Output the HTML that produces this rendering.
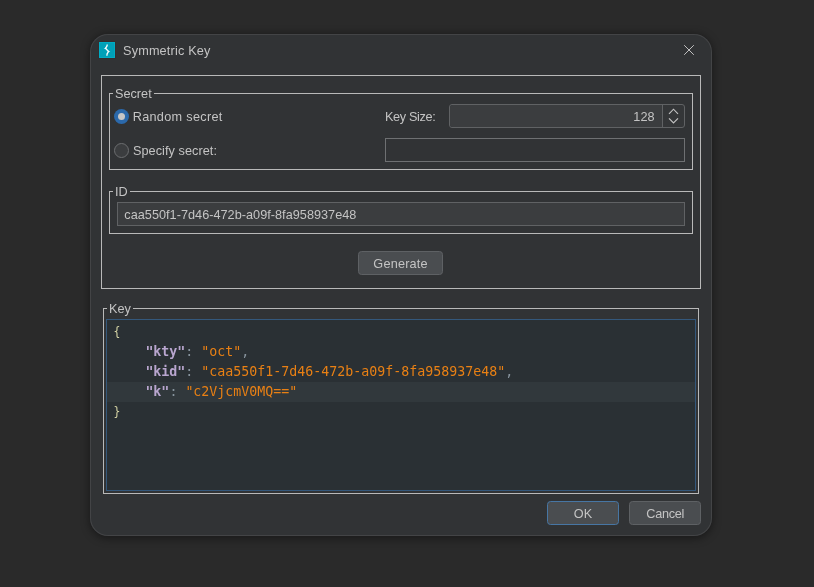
<!DOCTYPE html>
<html lang="en">
<head>
<meta charset="utf-8">
<title>Symmetric Key</title>
<style>
  html, body { margin: 0; padding: 0; }
  body {
    width: 814px; height: 587px; overflow: hidden; position: relative;
    background: #2a2a2a;
    font-family: "Liberation Sans", "DejaVu Sans", sans-serif;
    font-size: 12.7px; color: #c4c4c4;
  }
  #layer { position: absolute; left: 0; top: 0; width: 814px; height: 587px; will-change: transform; }
  .abs { position: absolute; box-sizing: border-box; }
  #dialog {
    left: 90px; top: 34px; width: 622px; height: 502px;
    background: #313335; border-radius: 18px;
    box-shadow: 0 0 0 1px rgba(96,96,98,0.4) inset, 0 1.5px 10px 0 rgba(0,0,0,0.46);
  }
  #icon { left: 99px; top: 42px; width: 16px; height: 16px; background: #00a0b8; box-shadow: inset 0 0 0 1px rgba(0,190,215,0.4), 0 0 0 0.5px rgba(60,34,34,0.45); }
  #title { left: 123px; top: 43px; letter-spacing: 0.17px; height: 16px; line-height: 16px; white-space: nowrap; }
  #close { left: 681px; top: 42px; width: 16px; height: 16px; }
  .line { background: #c9c9c9; }
  .lbl { white-space: nowrap; height: 16px; line-height: 16px; }
  .grp-title { background: #313335; padding: 0 2px; }
  .field { border: 1px solid #606264; background: #3b3d3f; }
  .btn {
    border: 1px solid #5e6164; background: #4a4d50; border-radius: 3.5px;
    text-align: center; line-height: 24px; height: 24px; white-space: nowrap;
  }
  .radio { width: 15px; height: 15px; border-radius: 50%; }
  #editor { left: 106px; top: 319px; width: 590px; height: 172px; background: #2a3034; border: 1px solid #34587c; }
  #curline { left: 107px; top: 382px; width: 588px; height: 20px; background: #31383c; }
  .code {
    font-family: "DejaVu Sans Mono", "Liberation Mono", monospace; font-size: 13.29px;
    white-space: pre; height: 20px; line-height: 20px; left: 113.4px; color: #87939d;
  }
  .k { color: #b9a6cf; font-weight: bold; }
  .s { color: #e98014; }
  .q { color: #a6a6a6; }
  .b { color: #d6d5a6; font-size: 11.4px; position: relative; top: 0px; }
</style>
</head>
<body>
<div id="layer">
<div id="dialog" class="abs"></div>

<!-- title bar -->
<div id="icon" class="abs">
  <svg width="16" height="16" viewBox="0 0 16 16"><path d="M8.2 2.5 L8.05 3.9 L6.5 6.3 L9.5 9.5 L8.1 11.9 L7.9 13.7" stroke="#f4fcfd" stroke-width="1.35" fill="none" stroke-linejoin="round"/><path d="M4.7 6.5 L6.9 5.5 L7.3 7.1 Z M11.3 9.3 L9.1 8.7 L8.7 10.4 Z" fill="#f4fcfd"/></svg>
</div>
<div id="title" class="abs">Symmetric Key</div>
<svg id="close" class="abs" viewBox="0 0 16 16"><path d="M3.2 3.2 L12.8 12.8 M12.8 3.2 L3.2 12.8" stroke="#c8c8c8" stroke-width="0.95" fill="none"/></svg>

<!-- outer panel border (101,75)-(700,288) -->
<div class="abs" style="left:101px;top:75px;width:600px;height:214px;border:1px solid #b9b9b9;"></div>

<!-- Secret group (109,93)-(692,169) -->
<div class="abs" style="left:109px;top:93px;width:584px;height:77px;border:1px solid #b9b9b9;"></div>
<div class="abs lbl grp-title" style="left:113px;top:86px;">Secret</div>

<div class="abs radio" style="left:114px;top:109px;background:#2b69ab;"></div>
<div class="abs" style="left:118px;top:113px;width:7px;height:7px;border-radius:50%;background:#c6c6c6;"></div>
<div class="abs lbl" style="left:132.7px;top:109px;letter-spacing:0.3px;">Random secret</div>

<div class="abs radio" style="left:114px;top:143px;background:#3b3d3f;border:1px solid #6c6e70;"></div>
<div class="abs lbl" style="left:133px;top:143px;letter-spacing:0.05px;">Specify secret:</div>

<div class="abs lbl" style="left:385px;top:109px;letter-spacing:-0.35px;">Key Size:</div>
<!-- spinner (449,104)-(685,128) -->
<div class="abs field" style="left:449px;top:104px;width:236px;height:24px;border-radius:3px;background:#343638;"></div>
<div class="abs" style="left:450px;top:105px;width:212px;height:22px;background:#3b3d3f;border-radius:3px 0 0 3px;"></div>
<div class="abs" style="left:662px;top:105px;width:1px;height:22px;background:#606264;"></div>
<div class="abs lbl" style="left:600px;top:109px;width:54.5px;text-align:right;">128</div>
<svg class="abs" style="left:664px;top:105px;width:20px;height:22px;" viewBox="0 0 20 22"><path d="M5 8.8 L9.5 4.2 L14 8.8 M5 13.4 L9.5 18 L14 13.4" stroke="#c2c2c2" stroke-width="1.15" fill="none"/></svg>

<!-- secret text field (385,138)-(685,162) -->
<div class="abs" style="left:385px;top:138px;width:300px;height:24px;border:1px solid #6e7072;background:#313335;"></div>

<!-- ID group (109,191)-(692,233) -->
<div class="abs" style="left:109px;top:191px;width:584px;height:43px;border:1px solid #b9b9b9;"></div>
<div class="abs lbl grp-title" style="left:113px;top:184px;">ID</div>
<div class="abs field" style="left:117px;top:202px;width:568px;height:24px;"></div>
<div class="abs lbl" style="left:124.3px;top:207px;letter-spacing:0.02px;">caa550f1-7d46-472b-a09f-8fa958937e48</div>

<!-- Generate -->
<div class="abs btn" style="left:358px;top:251px;width:85px;letter-spacing:0.2px;text-indent:0.2px;">Generate</div>

<!-- Key group (103,308)-(698,493) -->
<div class="abs" style="left:103px;top:308px;width:596px;height:186px;border:1px solid #b9b9b9;"></div>
<div class="abs lbl grp-title" style="left:107px;top:301px;">Key</div>
<div id="editor" class="abs"></div>
<div id="curline" class="abs"></div>
<div class="abs code" style="top:322px;"><span class="b">{</span></div>
<div class="abs code" style="top:342px;">    <span class="k">"kty"</span>: <span class="s">"oct"</span>,</div>
<div class="abs code" style="top:362px;">    <span class="k">"kid"</span>: <span class="s">"caa550f1-7d46-472b-a09f-8fa958937e48"</span>,</div>
<div class="abs code" style="top:382px;">    <span class="k">"k"</span>: <span class="s">"c2VjcmV0MQ=="</span></div>
<div class="abs code" style="top:402px;"><span class="b">}</span></div>

<!-- buttons -->
<div class="abs btn" style="left:547px;top:501px;width:72px;border-color:#4776a4;">OK</div>
<div class="abs btn" style="left:629px;top:501px;width:72px;letter-spacing:-0.3px;text-indent:0.4px;">Cancel</div>
</div>
</body>
</html>
